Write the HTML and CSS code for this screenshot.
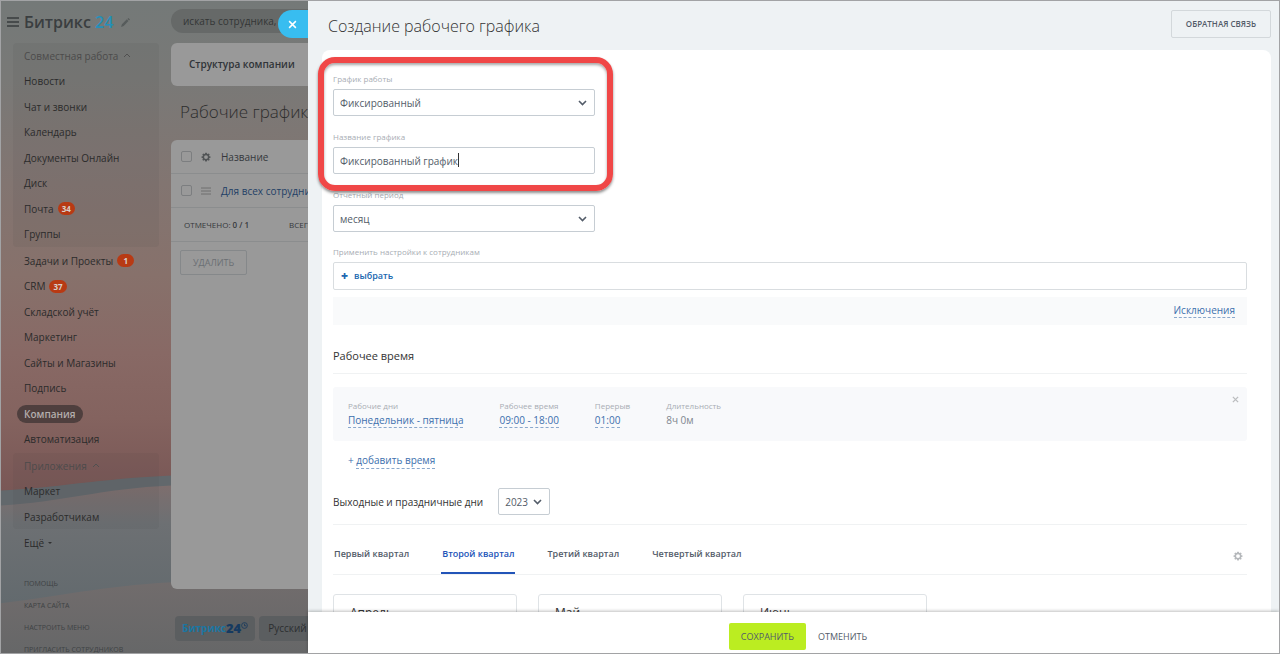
FILE: index.html
```html
<!DOCTYPE html>
<html lang="ru">
<head>
<meta charset="utf-8">
<title>Создание рабочего графика</title>
<link rel="stylesheet" href="styles.css">
</head>
<body>
<div class="frame">
  <svg class="scenery" viewBox="0 0 1280 654" preserveAspectRatio="none" aria-hidden="true">
    <defs>
      <linearGradient id="sky" x1="0" y1="0" x2="0" y2="1">
        <stop offset="0" stop-color="#747978"/>
        <stop offset=".12" stop-color="#797977"/>
        <stop offset=".28" stop-color="#827571"/>
        <stop offset=".42" stop-color="#87716b"/>
        <stop offset=".54" stop-color="#886965"/>
        <stop offset=".64" stop-color="#84635f"/>
        <stop offset=".76" stop-color="#785655"/>
      </linearGradient>
      <linearGradient id="dune" x1="0" y1="0" x2="0" y2="1">
        <stop offset="0" stop-color="#806e6d"/>
        <stop offset=".25" stop-color="#6d7073"/>
        <stop offset=".8" stop-color="#61696d"/>
        <stop offset="1" stop-color="#5c676c"/>
      </linearGradient>
      <linearGradient id="sand" x1="0" y1="0" x2="0" y2="1">
        <stop offset="0" stop-color="#736d6d"/>
        <stop offset="1" stop-color="#666768"/>
      </linearGradient>
    </defs>
    <rect width="1280" height="654" fill="url(#sky)"/>
    <path d="M0 491 C50 489 100 479 171 476 L1280 460 V654 H0Z" fill="#62686c"/>
    <path d="M0 506 C60 503 100 489 171 486 L1280 480 V654 H0Z" fill="url(#dune)"/>
    <path d="M0 604 C60 597 100 587 171 583 L1280 570 V654 H0Z" fill="url(#sand)"/>
  </svg>

  <aside class="sidebar">
    <div class="brand">
      <svg class="burger" viewBox="0 0 12 10"><path d="M0 1h12M0 5h12M0 9h12" stroke="#393d3e" stroke-width="1.4"/></svg>
      <span class="brand-name">Битрикс <b>24</b></span>
      <svg class="pencil" viewBox="0 0 10 10"><path d="M0 10l1-3 5.500-5.500 1.800 1.800L3 9zM7.200 1l1-1L10 1.800l-1 1z" fill="#575c5c"/></svg>
    </div>
    <nav class="menu">
      <ul class="menu-group shaded">
        <li class="caption">Совместная работа <svg viewBox="0 0 8 5"><path d="M1 4l3-3 3 3" fill="none" stroke="#505050"/></svg></li>
        <li><a href="#">Новости</a></li>
        <li><a href="#">Чат и звонки</a></li>
        <li><a href="#">Календарь</a></li>
        <li><a href="#">Документы Онлайн</a></li>
        <li><a href="#">Диск</a></li>
        <li><a href="#">Почта</a><span class="count">34</span></li>
        <li><a href="#">Группы</a></li>
      </ul>
      <ul class="menu-group">
        <li><a href="#">Задачи и Проекты</a><span class="count">1</span></li>
        <li><a href="#">CRM</a><span class="count">37</span></li>
        <li><a href="#">Складской учёт</a></li>
        <li><a href="#">Маркетинг</a></li>
        <li><a href="#">Сайты и Магазины</a></li>
        <li><a href="#">Подпись</a></li>
        <li><a href="#" class="current">Компания</a></li>
        <li><a href="#">Автоматизация</a></li>
      </ul>
      <ul class="menu-group shaded">
        <li class="caption">Приложения <svg viewBox="0 0 8 5"><path d="M1 4l3-3 3 3" fill="none" stroke="#505050"/></svg></li>
        <li><a href="#">Маркет</a></li>
        <li><a href="#">Разработчикам</a></li>
      </ul>
      <ul class="menu-group">
        <li><a href="#">Ещё</a><i class="caret"></i></li>
      </ul>
      <ul class="service">
        <li><a href="#">Помощь</a></li>
        <li><a href="#">Карта сайта</a></li>
        <li><a href="#">Настроить меню</a></li>
        <li><a href="#">Пригласить сотрудников</a></li>
      </ul>
    </nav>
  </aside>

  <main class="page">
    <input class="search" type="text" aria-label="Поиск" placeholder="искать сотрудника, документ, прочее...">
    <div class="section-tabs"><a href="#">Структура компании</a></div>
    <h2 class="page-title">Рабочие графики</h2>
    <section class="list">
      <div class="list-row head">
        <input type="checkbox" aria-label="Выбрать все">
        <svg class="gear" viewBox="0 0 16 16"><path fill-rule="evenodd" fill="#515456" d="M6.8 1h2.4l.4 1.8 1.1.5 1.6-1 1.6 1.7-1 1.5.5 1.2 1.8.3v2.2l-1.8.4-.5 1.1 1 1.6-1.6 1.6-1.6-1-1.1.5-.4 1.8H6.8l-.4-1.8-1.1-.5-1.6 1-1.6-1.6 1-1.6-.5-1.1L.8 9.2V7l1.8-.3.5-1.2-1-1.5 1.6-1.7 1.6 1 1.1-.5zM8 5a3.1 3.1 0 1 0 0 6.200A3.100 3.100 0 0 0 8 5z"/></svg>
        <span>Название</span>
      </div>
      <div class="list-row">
        <input type="checkbox" aria-label="Для всех сотрудников">
        <svg class="grip" viewBox="0 0 10 8"><path d="M0 1h10M0 4h10M0 7h10" stroke="#6e6e6e"/></svg>
        <a href="#">Для всех сотрудников</a>
      </div>
      <div class="list-row totals"><span>ОТМЕЧЕНО: <b>0 / 1</b></span><span>ВСЕГО: 1</span></div>
      <button class="delete" type="button">УДАЛИТЬ</button>
    </section>
    <footer class="page-footer">
      <button type="button" class="logo">Битрикс<b>24</b><svg viewBox="0 0 8 8"><circle cx="4" cy="4" r="3.300" fill="none" stroke="#1b3c5d"/><path d="M4 2v2.300h2" fill="none" stroke="#1b3c5d"/></svg></button>
      <button type="button">Русский</button>
    </footer>
  </main>

  <div class="slider">
    <button class="close" type="button" aria-label="Закрыть"><svg viewBox="0 0 8 8"><path d="M1 1l6 6M7 1l-6 6" stroke="#fff" stroke-width="1.300"/></svg></button>
    <header class="slider-head">
      <h1>Создание рабочего графика</h1>
      <button type="button">ОБРАТНАЯ СВЯЗЬ</button>
    </header>

    <form class="slider-body">
      <div class="spotlight">
        <div class="field">
          <label for="kind">График работы</label>
          <select id="kind"><option>Фиксированный</option></select>
        </div>
        <div class="field">
          <label for="name">Название графика</label>
          <div class="typing"><input id="name" type="text" value="Фиксированный график"></div>
        </div>
      </div>
      <div class="field">
        <label for="period">Отчетный период</label>
        <select id="period"><option>месяц</option></select>
      </div>
      <div class="field wide">
        <label for="people">Применить настройки к сотрудникам</label>
        <button id="people" type="button" class="picker"><b>+</b>выбрать</button>
      </div>
      <div class="exceptions"><a href="#" class="dashed">Исключения</a></div>

      <h3>Рабочее время</h3>
      <div class="shift">
        <dl><dt>Рабочие дни</dt><dd><a href="#" class="dashed">Понедельник - пятница</a></dd></dl>
        <dl><dt>Рабочее время</dt><dd><a href="#" class="dashed">09:00 - 18:00</a></dd></dl>
        <dl><dt>Перерыв</dt><dd><a href="#" class="dashed">01:00</a></dd></dl>
        <dl><dt>Длительность</dt><dd>8ч 0м</dd></dl>
        <button type="button" class="remove" aria-label="Удалить"><svg viewBox="0 0 8 8"><path d="M1 1l6 6M7 1l-6 6" stroke="#bbbdbf" stroke-width="1.500"/></svg></button>
      </div>
      <div class="add-time">+ <a href="#" class="dashed">добавить время</a></div>

      <div class="holidays">
        <label for="year">Выходные и праздничные дни</label>
        <select id="year"><option>2023</option></select>
      </div>
      <div class="quarters">
        <button type="button">Первый квартал</button>
        <button type="button" class="active">Второй квартал</button>
        <button type="button">Третий квартал</button>
        <button type="button">Четвертый квартал</button>
        <svg class="gear" viewBox="0 0 16 16"><path fill-rule="evenodd" fill="#b5b8bb" d="M6.800 1h2.400l.4 1.800 1.100.5 1.600-1 1.600 1.700-1 1.500.5 1.200 1.800.3v2.200l-1.800.4-.5 1.100 1 1.600-1.600 1.600-1.600-1-1.100.5-.4 1.800H6.800l-.4-1.800-1.100-.5-1.600 1-1.600-1.600 1-1.600-.5-1.100L.8 9.200V7l1.800-.3.5-1.200-1-1.500 1.600-1.700 1.600 1 1.100-.5zM8 5a3.100 3.100 0 1 0 0 6.200A3.100 3.100 0 0 0 8 5z"/></svg>
      </div>
      <div class="months">
        <section>Апрель</section>
        <section>Май</section>
        <section>Июнь</section>
      </div>
    </form>

    <footer class="slider-foot">
      <button type="button" class="save">СОХРАНИТЬ</button>
      <button type="button" class="cancel">ОТМЕНИТЬ</button>
    </footer>
  </div>
</div>
</body>
</html>
```
FILE: styles.css
```css
*, *::before, *::after { box-sizing: border-box; }
body {
  margin: 0;
  font: 10px/16px "Open Sans", "Noto Sans", sans-serif;
  color: #535c69;
}
ul, dl, dd, h1, h2, h3 { margin: 0; padding: 0; list-style: none; }
a { text-decoration: none; color: inherit; }
button, input, select { font: inherit; color: inherit; margin: 0; }
button { background: none; border: 0; padding: 0; cursor: pointer; white-space: nowrap; }
svg { flex: none; }

.frame {
  position: relative;
  display: flex;
  height: 100vh;
  overflow: hidden;
  border: 1px solid #a2a3a5;
}
.scenery { position: absolute; inset: 0; width: 100%; height: 100%; }

/* Left menu */
.sidebar { position: relative; width: 170px; flex: none; color: #2b2b2b; }
.brand { display: flex; align-items: center; height: 42px; padding: 0 6px; }
.burger { width: 12px; height: 10px; margin-right: 5px; }
.brand-name { font-size: 16px; font-weight: 600; color: #3a3e40; }
.brand-name b { font-weight: 600; color: #2590ba; }
.pencil { width: 9px; height: 9px; margin-left: 8px; }
.menu { padding: 0 12px; }
.menu-group { padding: 0 11px; margin-bottom: 1px; }
.menu-group li { display: flex; align-items: center; height: 25px; }
.menu-group li:nth-child(even) { height: 26px; }
.shaded { background: rgba(60, 60, 60, .08); border-radius: 4px; }
.caption { color: #4c4b4b; }
.caption svg { width: 8px; height: 5px; margin-left: 5px; }
.count {
  margin-left: 4px;
  padding: 0 4px;
  min-width: 17px;
  border-radius: 7px;
  background: #b83a14;
  color: #d8d0cc;
  font-size: 8px;
  line-height: 13px;
  font-weight: 700;
  text-align: center;
}
.current {
  margin-left: -7px;
  padding: 0 7px;
  border-radius: 9px;
  line-height: 18px;
  background: #4f3f3e;
  color: #b3adac;
  font-weight: 600;
}
.caret { margin: 2px 0 0 4px; border: 2px solid transparent; border-top-color: #303131; }
.service { padding: 17px 11px 0; font-size: 7px; text-transform: uppercase; color: #3e4244; }
.service li { height: 22px; line-height: 22px; white-space: nowrap; }

/* Page under the slider */
.page { position: relative; flex: 1; min-width: 0; display: flex; flex-direction: column; padding: 8px 0 12px; }
.search {
  height: 24px;
  flex: none;
  border: 0;
  border-radius: 12px;
  padding: 0 12px;
  background: #666968;
}
.search::placeholder { color: #343636; opacity: 1; }
.section-tabs {
  margin-top: 10px;
  padding: 0 18px;
  line-height: 43px;
  border-radius: 6px;
  background: #999;
  color: #303438;
  font-weight: 600;
}
.page-title { margin: 13px 9px 15px; font-size: 17px; line-height: 26px; font-weight: 300; color: #2d2d2d; }
.list { flex: 1; border-radius: 6px; background: #999; color: #35383c; }
.list-row { display: flex; align-items: center; height: 34px; padding: 0 10px; border-bottom: 1px solid #8b8d8e; }
.list-row a { color: #1f3f66; white-space: nowrap; }
.list-row input { appearance: none; width: 11px; height: 11px; border: 1px solid #7c7e80; border-radius: 2px; }
.list-row svg { width: 10px; height: 10px; margin: 0 10px 0 9px; }
.totals { gap: 40px; padding: 0 13px; font-size: 8px; white-space: nowrap; }
.totals b { font-weight: 600; }
.delete { margin: 8px 9px; padding: 0 12px; border: 1px solid #85888a; border-radius: 2px; font-size: 9px; line-height: 23px; color: #6b6f74; }
.page-footer { display: flex; gap: 4px; margin-top: 27px; padding-left: 4px; }
.page-footer button { padding: 0 9px; border-radius: 4px; background: #5b5e60; line-height: 25px; color: #2c2e30; }
.page-footer .logo { display: flex; padding: 0 7px; color: #1a76a3; font-weight: 700; }
.logo b { color: #163a60; font-size: 13px; }
.logo svg { width: 7px; height: 7px; margin-top: 6px; }

/* Slider */
.slider {
  position: absolute;
  inset: 0 0 0 307px;
  display: flex;
  flex-direction: column;
  background: #eef2f4;
}
.close {
  position: absolute;
  right: 100%;
  top: 9px;
  display: flex;
  align-items: center;
  justify-content: center;
  width: 30px;
  height: 28px;
  padding-right: 2px;
  border-radius: 14px 0 0 14px;
  background: #38bdf0;
}
.close svg { width: 9px; height: 9px; }
.slider-head { display: flex; align-items: center; justify-content: space-between; height: 49px; flex: none; padding: 0 8px 0 20px; }
.slider-head h1 { font-size: 16px; line-height: 24px; font-weight: 300; color: #333; }
.slider-head button { margin-bottom: 3px; padding: 0 14px; border: 1px solid #d3d8db; border-radius: 2px; font-size: 8px; font-weight: 600; line-height: 26px; }
.slider-body {
  flex: 1;
  min-height: 0;
  overflow-x: visible;
  overflow-y: clip;
  margin: 0 8px 0 14px;
  padding: 22px 24px 0 11px;
  border-radius: 8px 8px 0 0;
  background: #fff;
}
.spotlight { position: relative; }
.spotlight::after {
  content: "";
  position: absolute;
  inset: -15px auto -3px -15px;
  width: 295px;
  border: 6px solid #f04747;
  border-radius: 17px;
  box-shadow: 0 2px 3px rgba(0, 0, 0, .45), inset 0 2px 3px rgba(0, 0, 0, .35);
  pointer-events: none;
}
.field { width: 262px; padding-bottom: 14px; }
.spotlight + .field { padding-bottom: 13px; }
.field.wide { width: auto; padding-bottom: 7px; }
.field label, dt { display: block; font-size: 8px; line-height: 14px; color: #a8adb4; }
.field label { margin-bottom: 3px; }
.field input, select {
  display: block;
  width: 100%;
  height: 27px;
  padding: 0 6px;
  border: 1px solid #c6cdd3;
  border-radius: 2px;
  background: #fff;
  outline: 0;
}
/* Text cursor after the typed name */
.typing { position: relative; }
.typing::after { content: ""; position: absolute; left: 125px; top: 6px; width: 1px; height: 14px; background: #333; }
select {
  appearance: none;
  background: #fff url("data:image/svg+xml,%3Csvg xmlns='http://www.w3.org/2000/svg' width='9' height='6'%3E%3Cpath d='M1 1l3.500 3.500L8 1' fill='none' stroke='%23535c69' stroke-width='1.600'/%3E%3C/svg%3E") no-repeat right 7px center;
}
.picker { display: flex; align-items: center; gap: 6px; width: 100%; height: 28px; padding: 0 7px; border: 1px solid #d9dde0; border-radius: 2px; color: #2067b0; font-size: 9px; font-weight: 600; }
.picker b { font-size: 12px; }
.dashed { color: #3c6fad; border-bottom: 1px dashed #8aa8cd; }
.exceptions { height: 28px; padding: 5px 12px; background: #f9fafb; text-align: right; }
h3 { padding: 23px 0 9px; border-bottom: 1px solid #f0f2f3; font-size: 11px; line-height: 16px; font-weight: 400; color: #333; }
.shift { position: relative; display: flex; gap: 36px; margin-top: 13px; padding: 12px 15px; border-radius: 3px; background: #f8f9fb; height: 54px; }
.shift dd { line-height: 14px; color: #80868e; }
.remove { position: absolute; right: 8px; top: 8px; width: 7px; height: 8px; }
.remove svg { display: block; width: 7px; height: 7px; }
.add-time { padding: 11px 15px 0; color: #3c6fad; }
.add-time .dashed { padding-bottom: 1px; }
.holidays { display: flex; align-items: center; gap: 15px; margin-top: 20px; padding-bottom: 9px; border-bottom: 1px solid #f0f2f3; color: #333; }
.holidays select { width: 52px; color: #535c69; }
.quarters { display: flex; align-items: center; gap: 31px; border-bottom: 1px solid #f0f2f3; }
.quarters button { height: 49px; padding: 10px 1px 0; border-bottom: 2px solid transparent; font-size: 9px; font-weight: 600; }
.quarters .active { color: #2254b8; border-color: #2254b8; }
.quarters .gear { width: 10px; height: 10px; margin: 13px 4px 0 auto; }
.months { display: flex; gap: 21px; margin-top: 19px; }
.months section { width: 184px; height: 160px; padding: 8px 16px; border: 1px solid #dfe3e6; border-radius: 3px; font-size: 12px; line-height: 20px; color: #333; }
.slider-foot {
  position: relative;
  display: flex;
  justify-content: center;
  padding: 11px 0 3px 9px;
  background: #fff;
  box-shadow: 0 -1px 3px rgba(0, 0, 0, .25);
  font-size: 9px;
  line-height: 27px;
}
.save { padding: 0 12px; border-radius: 2px; background: #bbed21; }
.cancel { padding-left: 12px; }
```
